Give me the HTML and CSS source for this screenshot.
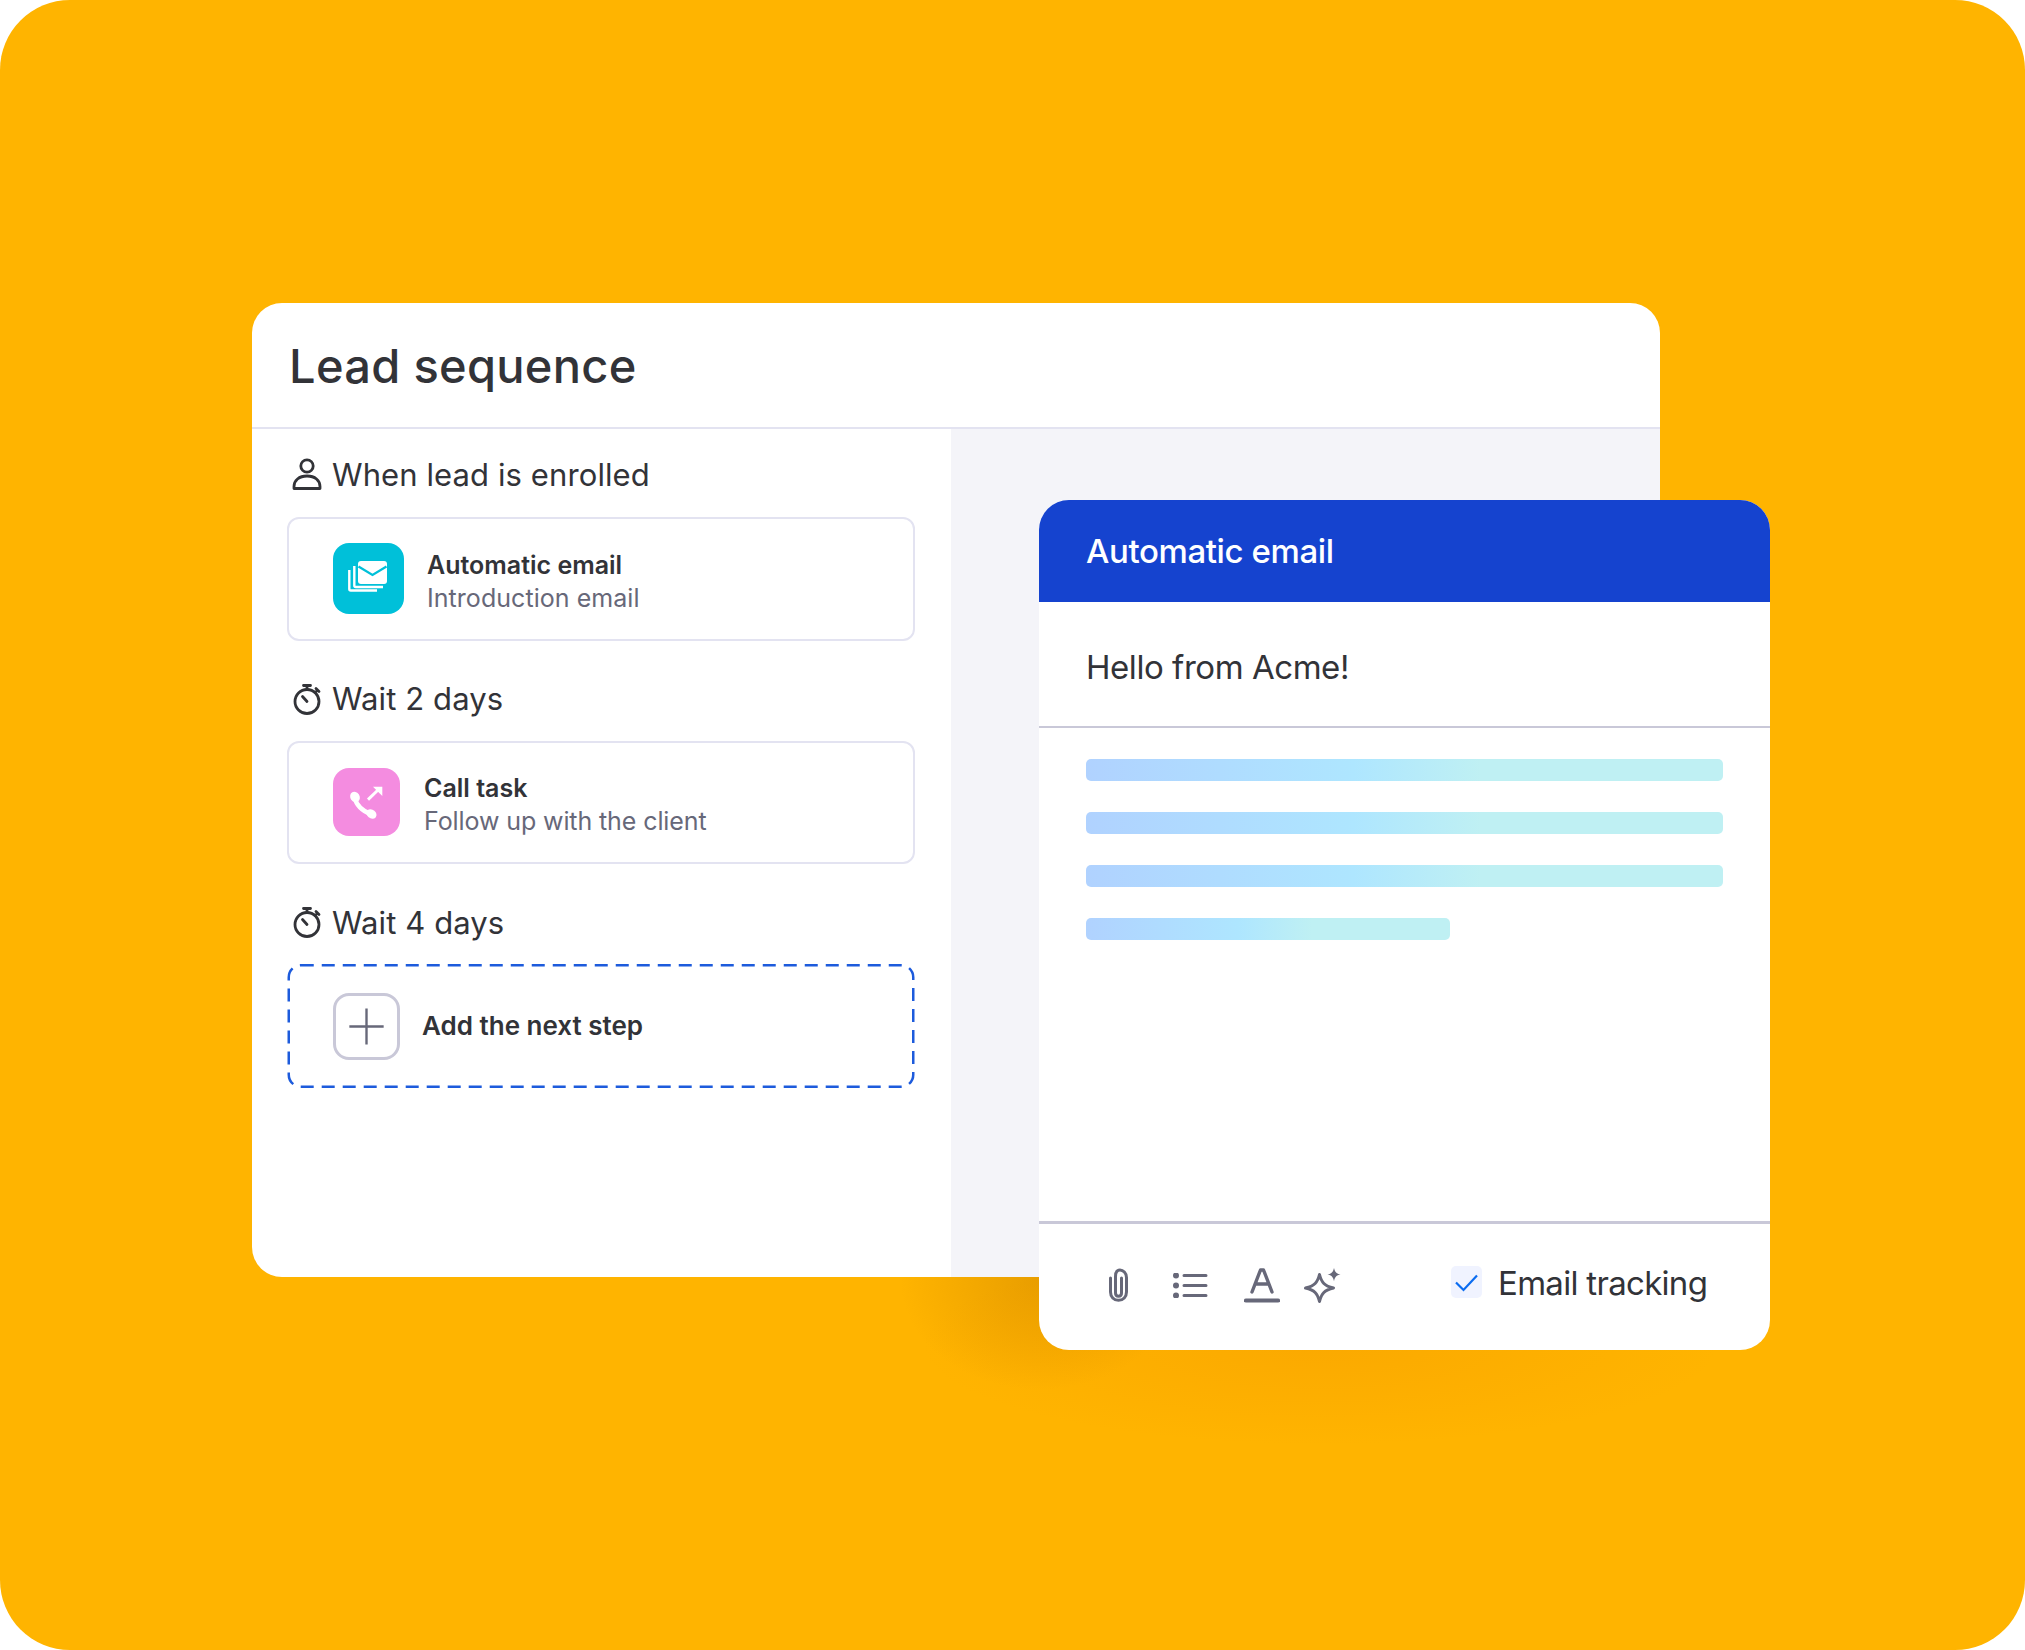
FILE: index.html
```html
<!DOCTYPE html>
<html lang="en">
<head>
<meta charset="utf-8">
<title>Lead sequence</title>
<link rel="stylesheet" href="styles.css">
</head>
<body>
<main class="stage">
  <section class="lead-card">
    <header class="lead-head"><h1 class="lead-title">Lead sequence</h1></header>
    <div class="lead-body">
      <div class="steps">
        <div class="step-label step-label-first">
          <svg class="label-icon" viewBox="0 0 32 32" fill="none" stroke="#323338" stroke-width="2.800"><circle cx="16" cy="8" r="6.200"/><path d="M3 30.500v-2c0-6 5-10.500 13-10.500s13 4.500 13 10.500v2z" stroke-linejoin="round"/></svg>
          <span>When lead is enrolled</span>
        </div>
        <div class="step-card step-card-mail">
          <div class="tile tile-mail">
            <svg viewBox="0 0 71 71" fill="none"><path d="M16.300 27v19a1.500 1.500 0 0 0 1.500 1.500H44" stroke="#fff" stroke-width="2.400"/><path d="M21.300 23v19.500a1.500 1.500 0 0 0 1.500 1.500H50" stroke="#fff" stroke-width="2.400"/><rect x="25" y="18" width="29" height="23" rx="3" fill="#fff"/><path d="M25.500 23.500 39.500 32l14-8.500" stroke="#00c0d9" stroke-width="2.200"/></svg>
          </div>
          <div class="step-text"><div class="step-name">Automatic email</div><div class="step-sub">Introduction email</div></div>
        </div>
        <div class="step-label">
          <svg class="label-icon" viewBox="0 0 32 32" fill="none" stroke="#323338" stroke-width="2.800" stroke-linecap="round"><circle cx="16" cy="18.500" r="12"/><path d="M12.500 2.500h7M16 2.500V6M25 5.500l3 3M26.500 7l-2.500 2.500M11.500 13.500 16 18.500"/></svg>
          <span>Wait 2 days</span>
        </div>
        <div class="step-card step-card-call">
          <div class="tile tile-call">
            <svg viewBox="0 0 67 68" fill="none"><path d="M21.500 29Q24 41 38.500 46.500" stroke="#fff" stroke-width="4.500" stroke-linecap="round"/><ellipse cx="22" cy="29" rx="4.600" ry="5.400" transform="rotate(-35 22 29)" fill="#fff"/><ellipse cx="38.500" cy="46" rx="4.400" ry="5.400" transform="rotate(-50 38.500 46)" fill="#fff"/><path d="M35 31.700 45 22" stroke="#fff" stroke-width="3"/><path d="M40 18.700h9.300V28z" fill="#fff"/></svg>
          </div>
          <div class="step-text"><div class="step-name">Call task</div><div class="step-sub">Follow up with the client</div></div>
        </div>
        <div class="step-label">
          <svg class="label-icon" viewBox="0 0 32 32" fill="none" stroke="#323338" stroke-width="2.800" stroke-linecap="round"><circle cx="16" cy="18.500" r="12"/><path d="M12.500 2.500h7M16 2.500V6M25 5.500l3 3M26.500 7l-2.500 2.500M11.500 13.500 16 18.500"/></svg>
          <span>Wait 4 days</span>
        </div>
        <div class="step-add">
          <svg class="dash-outline" viewBox="0 0 627 124" fill="none"><rect x="1.250" y="1.250" width="624.500" height="121.500" rx="12" stroke="#1d5bdc" stroke-width="2.500" stroke-dasharray="13 8"/></svg>
          <div class="tile tile-add">
            <svg viewBox="0 0 63 64" fill="none" stroke="#676879" stroke-width="2.500"><path d="M31.500 13v38M13.500 32h36"/></svg>
          </div>
          <div class="step-name step-name-add">Add the next step</div>
        </div>
      </div>
      <div class="side-panel"></div>
    </div>
  </section>

  <section class="email-card">
    <header class="email-head">Automatic email</header>
    <div class="email-subject">Hello from Acme!</div>
    <div class="email-body">
      <div class="bar"></div>
      <div class="bar"></div>
      <div class="bar"></div>
      <div class="bar bar-short"></div>
    </div>
    <footer class="email-foot">
      <div class="tools">
        <svg class="tool tool-clip" viewBox="0 0 21 34" fill="none" stroke="#676879" stroke-width="3" stroke-linecap="round"><path d="M13.500 10v15c0 2-1.300 3.300-3 3.300S7.500 27 7.500 25V8.500C7.500 4.500 9 2 12 2s6.500 3 6.500 7.500V24c0 4.800-3.300 8.300-8 8.300s-8-3.500-8-8.300V10"/></svg>
        <svg class="tool tool-list" viewBox="0 0 35 25" fill="none" stroke="#676879" stroke-width="3" stroke-linecap="round"><path d="M11 2.500h22M11 12.500h22M11 22.500h22"/><g fill="#676879" stroke="none"><circle cx="3" cy="2.500" r="3"/><circle cx="3" cy="12.500" r="3"/><circle cx="3" cy="22.500" r="3"/></g></svg>
        <svg class="tool tool-font" viewBox="0 0 36 35" fill="none" stroke="#676879" stroke-width="3.400" stroke-linecap="round" stroke-linejoin="round"><path d="M8 24 16.500 2h3L28 24M11 16h14"/><path d="M2 32.500h32" stroke-width="4.200"/></svg>
        <svg class="tool tool-spark" viewBox="0 0 37 35" fill="none"><path d="M15.500 6.500c2 8 5 11.500 14 13.500-9 2-12 5.500-14 13.500-2-8-5-11.500-14-13.500 9-2 12-5.500 14-13.500z" stroke="#676879" stroke-width="3" stroke-linejoin="round"/><path d="M30 0c.8 4 2.500 5.700 6.500 6.500-4 .8-5.700 2.500-6.500 6.800-.8-4.300-2.500-6-6.500-6.800 4-.8 5.700-2.500 6.500-6.500z" fill="#676879"/></svg>
      </div>
      <div class="tracking">
        <span class="check"><svg viewBox="0 0 31 32" fill="none" stroke="#0b6cf0" stroke-width="2.200"><path d="M5 16.500 12.500 24 26 9.500"/></svg></span>
        <span class="tracking-text">Email tracking</span>
      </div>
    </footer>
  </section>
</main>
</body>
</html>
```
FILE: styles.css
```css
* { box-sizing: border-box; }
html, body { margin: 0; padding: 0; background: #fff; }
body { font-family: "Inter", "Liberation Sans", sans-serif; color: #323338; }

.stage {
  position: relative;
  width: 2025px;
  height: 1650px;
  padding: 303px 0 0 252px;
  background: #ffb400;
  border-radius: 70px;
  overflow: hidden;
}
/* soft shadow cast by the email card; it sits behind the lead card */
.stage::before {
  content: "";
  position: absolute;
  left: 800px;
  top: 1240px;
  width: 1000px;
  height: 300px;
  background:
    radial-gradient(ellipse 140px 110px at 240px 40px, rgba(190, 115, 0, 0.34), rgba(190, 115, 0, 0) 100%),
    radial-gradient(ellipse 400px 100px at 520px 105px, rgba(235, 125, 0, 0.2), rgba(235, 125, 0, 0) 100%);
}

.lead-card {
  position: relative;
  width: 1408px;
  height: 974px;
  display: flex;
  flex-direction: column;
  background: #fff;
  border-radius: 30px;
  overflow: hidden;
}
.lead-head {
  height: 126px;
  flex: none;
  padding-left: 37px;
  display: flex;
  align-items: center;
  border-bottom: 2px solid #e3e3f1;
}
.lead-title { margin: 0; font-size: 47px; font-weight: 500; letter-spacing: 0.3px; color: #323338; }

.lead-body { flex: 1; display: flex; min-height: 0; }
.steps { width: 699px; flex: none; padding: 0 36px 0 35px; }
.side-panel { flex: 1; background: #f4f4f9; }

.step-label {
  height: 100px;
  display: flex;
  align-items: center;
  gap: 9px;
  padding: 16px 0 0 4px;
  font-size: 31px;
  letter-spacing: 0.1px;
}
.step-label-first { height: 88px; padding-top: 2px; }
.label-icon { width: 32px; height: 32px; flex: none; }

.step-card, .step-add {
  width: 628px;
  display: flex;
  align-items: center;
  border-radius: 12px;
}
.step-card { height: 123.5px; border: 2px solid #e3e3f1; padding-left: 44px; }
.step-add { position: relative; height: 124px; padding-left: 46px; }
.dash-outline { position: absolute; left: 0; top: 0; width: 100%; height: 100%; }

.tile { flex: none; border-radius: 16px; display: flex; }
.tile svg { width: 100%; height: 100%; display: block; }
.tile-mail { width: 71px; height: 71px; background: #00c0d9; }
.tile-call { width: 67px; height: 68px; background: #f48ce0; }
.tile-add { width: 67px; height: 67px; border: 3px solid #c9c8d8; background: #fff; }

.step-text { margin: 5px 0 0 23px; display: flex; flex-direction: column; gap: 3px; }
.step-card-call .step-text { margin-left: 24px; }
.step-name { font-size: 25px; font-weight: 600; line-height: 30px; }
.step-sub { font-size: 25px; line-height: 30px; color: #676879; letter-spacing: 0.05px; }
.step-card-call .step-sub { letter-spacing: -0.1px; }
.step-name-add { margin-left: 22px; font-size: 26px; }

.email-card {
  position: absolute;
  left: 1039px;
  top: 500px;
  width: 731px;
  height: 850px;
  display: flex;
  flex-direction: column;
  background: #fff;
  border-radius: 30px;
}
.email-head {
  height: 102px;
  flex: none;
  padding-left: 47px;
  display: flex;
  align-items: center;
  background: #1543cf;
  border-radius: 30px 30px 0 0;
  color: #fff;
  font-size: 33px;
  font-weight: 500;
  letter-spacing: -0.4px;
}
.email-subject {
  height: 126px;
  flex: none;
  padding: 5px 0 0 47px;
  display: flex;
  align-items: center;
  border-bottom: 2px solid #c9c8d8;
  font-size: 33px;
  letter-spacing: -0.45px;
}
.email-body {
  flex: 1;
  padding: 31px 47px 0;
  display: flex;
  flex-direction: column;
  gap: 31px;
  border-bottom: 3px solid #c9c8d8;
}
.bar {
  height: 22px;
  flex: none;
  border-radius: 5px;
  background: linear-gradient(90deg, #b0d2ff 0%, #aee6ff 42%, #bff0f3 62%, #bff0f3 100%);
}
.bar-short { width: 364px; }

.email-foot {
  height: 126px;
  flex: none;
  display: flex;
  align-items: flex-start;
  padding-top: 44px;
}
.tools { display: flex; align-items: flex-start; margin-left: 69px; }
.tool { display: block; flex: none; }
.tool-clip { width: 21px; height: 34px; }
.tool-list { width: 35px; height: 25px; margin: 5px 0 0 44px; }
.tool-font { width: 36px; height: 35px; margin-left: 36px; }
.tool-spark { width: 37px; height: 35px; margin-left: 24px; }
.tracking { display: flex; align-items: flex-start; margin-left: 110px; margin-top: -2px; gap: 16px; }
.check { width: 31px; height: 32px; flex: none; background: #f0f3ff; border-radius: 5px; display: flex; }
.check svg { width: 100%; height: 100%; display: block; }
.tracking-text { font-size: 33px; line-height: 34px; letter-spacing: -0.7px; }
```
